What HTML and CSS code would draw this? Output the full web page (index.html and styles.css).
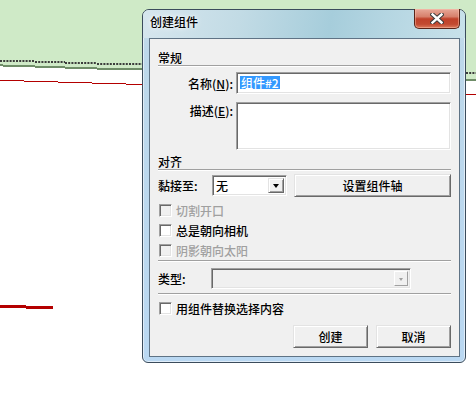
FILE: index.html
```html
<!DOCTYPE html>
<html lang="zh-CN">
<head>
<meta charset="utf-8">
<title>创建组件</title>
<link rel="stylesheet" href="styles.css">
</head>
<body>
<div class="desk">
  <svg class="canvas" width="476" height="403" viewBox="0 0 476 403">
    <path fill="#cfeac7" d="M0 0H476V79H142V68H97V67H65V66H35V65H3V64H0Z"/>
    <path fill="#6f8d68" d="M0 64h3v2H0z M3 65h32v2H3z M35 66h30v2H35z M65 67h32v2H65z M97 68h45v2H97z M466 79h10v2h-10z"/>
    <g stroke="#3b3b3b" stroke-width="2" stroke-dasharray="2 1.2" fill="none">
      <path d="M0 61H35"/><path d="M35 62H65"/><path d="M65 63H97"/><path d="M97 64H142"/><path d="M466 73H476"/>
    </g>
    <path fill="#b40000" d="M0 80h24v1H0z M24 81h34v1H24z M58 82h34v1H58z M92 83h34v1H92z M126 84h16v1h-16z M466 94h10v1h-10z M0 305h26v3H0z M26 306h27v3H26z"/>
  </svg>

  <div class="window">
    <div class="titlebar">
      <span class="title">创建组件</span>
      <div class="close">
        <svg width="14" height="11" viewBox="0 0 14 11">
          <path d="M2.5 1.5L11.5 9.5M11.5 1.5L2.5 9.5" stroke="#3a3a3a" stroke-width="4.4" stroke-linecap="square"/>
          <path d="M2.5 1.5L11.5 9.5M11.5 1.5L2.5 9.5" stroke="#ffffff" stroke-width="2.4" stroke-linecap="square"/>
        </svg>
      </div>
    </div>

    <div class="client">
      <div class="group-head head-general">常规</div>

      <div class="row row-name">
        <label class="lbl">名称(<u>N</u>):</label>
        <div class="field field-name"><span class="sel">组件#2</span></div>
      </div>

      <div class="row row-desc">
        <label class="lbl">描述(<u>E</u>):</label>
        <div class="field field-desc"></div>
      </div>

      <div class="group-head head-align">对齐</div>

      <div class="row row-snap">
        <span class="lbl-left lbl-snap">黏接至:</span>
        <div class="combo combo-snap">
          <span class="combo-text">无</span>
          <span class="drop"><span class="tri"></span></span>
        </div>
        <div class="btn btn-axis">设置组件轴</div>
      </div>

      <div class="checks">
        <div class="check disabled"><span class="box"></span>切割开口</div>
        <div class="check"><span class="box"></span>总是朝向相机</div>
        <div class="check disabled"><span class="box"></span>阴影朝向太阳</div>
      </div>

      <div class="sep sep-a"></div>

      <div class="row row-type">
        <span class="lbl-left lbl-type">类型:</span>
        <div class="combo combo-type">
          <span class="combo-text"></span>
          <span class="drop drop-off"><span class="tri tri-off"></span></span>
        </div>
      </div>

      <div class="sep sep-b"></div>

      <div class="check check-replace"><span class="box"></span>用组件替换选择内容</div>

      <div class="actions">
        <div class="btn btn-act">创建</div>
        <div class="btn btn-act">取消</div>
      </div>
    </div>
  </div>
</div>
</body>
</html>
```

FILE: styles.css
```css
* { box-sizing: border-box; }

body {
  margin: 0;
  font-family: "Noto Sans CJK SC", "Liberation Sans", sans-serif;
  font-size: 12px;
  font-weight: 500;
  color: #000;
}

.desk {
  position: relative;
  width: 476px;
  height: 403px;
  overflow: hidden;
  background: #fff;
}

.canvas {
  position: absolute;
  left: 0;
  top: 0;
  display: block;
}

/* window frame */
.window {
  position: absolute;
  left: 142px;
  top: 9px;
  width: 324px;
  height: 354px;
  border: 1px solid #3b4c5c;
  border-radius: 7px 7px 6px 6px;
  background: linear-gradient(to bottom, #c9dde8 0, #bdd8ea 40px, #bad8f2 100%);
  box-shadow: inset 0 0 0 1px rgba(255, 255, 255, 0.55);
  display: flex;
  flex-direction: column;
}

.titlebar {
  height: 28px;
  display: flex;
  align-items: flex-start;
  padding-left: 7px;
  border-radius: 6px 6px 0 0;
  background: linear-gradient(100deg, #d6e6ee 0%, #c2dbe5 30%, #a6cddb 58%, #b5d6e2 75%, #c8e1ea 100%);
}

.title {
  margin-top: 5px;
  line-height: 14px;
  text-shadow: 0 0 6px rgba(255, 255, 255, 0.9), 0 0 3px rgba(255, 255, 255, 0.8);
}

.close {
  margin-left: auto;
  margin-right: 5px;
  margin-top: -1px;
  width: 46px;
  height: 20px;
  border: 1px solid #5a2418;
  border-top: none;
  border-radius: 0 0 5px 5px;
  background: linear-gradient(to bottom, #e7a898 0%, #d7806c 40%, #c0412a 52%, #c24a31 80%, #dc7a5c 100%);
  box-shadow: inset 0 0 0 1px rgba(255, 200, 180, 0.45);
  display: flex;
  align-items: center;
  justify-content: center;
}

.close svg { display: block; }

/* client area */
.client {
  margin: 0 5px 0 6px;
  height: 319px;
  border: 1px solid #5f7385;
  background: #f0f0f0;
  padding: 0 8px;
  display: flex;
  flex-direction: column;
}

.group-head {
  line-height: 15px;
  height: 16px;
  border-bottom: 1px solid #a0a0a0;
  box-shadow: 0 1px 0 #fff;
}

.head-general { margin-top: 11px; }
.head-align { margin-top: 4px; }

.row {
  display: flex;
}

.lbl {
  width: 75px;
  text-align: right;
  line-height: 15px;
  margin-right: 3px;
  flex: none;
}

.row-name {
  margin-top: 6px;
  height: 22px;
  align-items: center;
}

.row-desc {
  margin-top: 8px;
  height: 48px;
  align-items: flex-start;
}

.row-desc .lbl { margin-top: 1px; }

.field {
  flex: 1;
  height: 100%;
  background: #fff;
  border: 1px solid;
  border-color: #a0a0a0 #fff #fff #a0a0a0;
  box-shadow: inset 1px 1px 0 #696969, inset -1px -1px 0 #e3e3e3;
}

.field-name {
  padding: 3px 0 0 3px;
  line-height: 13px;
}

.sel {
  background: #3399ff;
  color: #fff;
  display: inline-block;
  line-height: 13px;
  padding: 0 1px;
}

.row-snap {
  margin-top: 4px;
  height: 23px;
  align-items: center;
}

.lbl-left {
  line-height: 15px;
  flex: none;
}

.lbl-snap { width: 54px; }
.lbl-type { width: 53px; }

.combo {
  height: 21px;
  display: flex;
  align-items: stretch;
  border: 1px solid;
  border-color: #a0a0a0 #fff #fff #a0a0a0;
  box-shadow: inset 1px 1px 0 #696969, inset -1px -1px 0 #e3e3e3;
  padding: 2px 2px 2px 3px;
  flex: none;
}

.combo-snap {
  width: 75px;
  background: #fff;
}

.combo-type {
  width: 200px;
  background: #f0f0f0;
}

.combo-text {
  flex: 1;
  line-height: 15px;
}

.drop {
  width: 16px;
  background: #f0f0f0;
  border: 1px solid;
  border-color: #e3e3e3 #696969 #696969 #e3e3e3;
  box-shadow: inset 1px 1px 0 #fff, inset -1px -1px 0 #a0a0a0;
  display: flex;
  align-items: center;
  justify-content: center;
}

.tri {
  width: 0;
  height: 0;
  border-left: 3.5px solid transparent;
  border-right: 3.5px solid transparent;
  border-top: 4px solid #000;
  margin-top: 1px;
}

.drop-off {
  width: 14px;
  border-color: #fff #a0a0a0 #a0a0a0 #fff;
  box-shadow: none;
}

.tri-off {
  border-left-width: 2.5px;
  border-right-width: 2.5px;
  border-top: 3px solid #a0a0a0;
}

.btn {
  height: 23px;
  background: #f0f0f0;
  border: 1px solid;
  border-color: #e3e3e3 #696969 #696969 #e3e3e3;
  box-shadow: inset 1px 1px 0 #fff, inset -1px -1px 0 #a0a0a0;
  display: flex;
  align-items: center;
  justify-content: center;
  line-height: 15px;
}

.btn-axis {
  flex: 1;
  margin-left: 7px;
}

.checks {
  margin-top: 3px;
  display: flex;
  flex-direction: column;
}

.check {
  height: 20px;
  display: flex;
  align-items: center;
  line-height: 15px;
}

.check.disabled { color: #a0a0a0; }

.box {
  width: 13px;
  height: 13px;
  margin-left: 1px;
  margin-right: 4px;
  background: #fff;
  border: 1px solid;
  border-color: #a0a0a0 #fff #fff #a0a0a0;
  box-shadow: inset 1px 1px 0 #696969, inset -1px -1px 0 #e3e3e3;
  flex: none;
}

.check.disabled .box { background: #f0f0f0; }

.sep {
  height: 1px;
  background: #a0a0a0;
  box-shadow: 0 1px 0 #fff;
}

.sep-b { margin-top: 4px; }

.row-type {
  margin-top: 7px;
  height: 21px;
  align-items: center;
}

.check-replace { margin-top: 4px; }

.actions {
  margin-top: 7px;
  display: flex;
  justify-content: flex-end;
  gap: 8px;
}

.btn-act { width: 75px; }
```
